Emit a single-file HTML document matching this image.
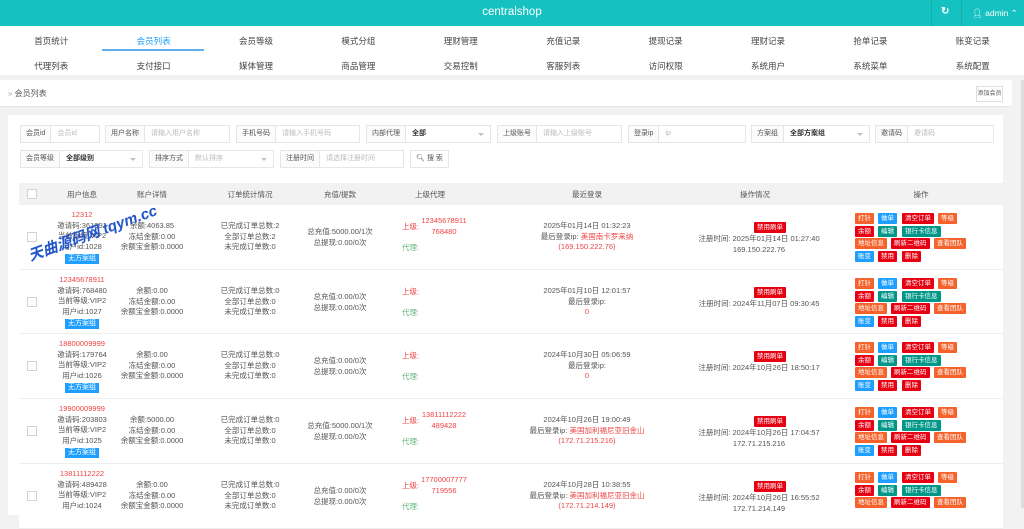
<!DOCTYPE html><html><head><meta charset="utf-8"><style>
*{margin:0;padding:0;box-sizing:border-box}
body{width:1024px;height:508px;overflow:hidden;background:#f2f2f2;font-family:"Liberation Sans","Noto Sans CJK SC",sans-serif;color:#555;font-size:7.5px;position:relative}
.a{position:absolute}
.hd{left:0;top:0;width:1024px;height:26px;background:#16c1c1;color:#fff}
.nav{left:0;top:26px;width:1024px;height:49px;background:#fff}
.nav span{position:absolute;width:102.4px;text-align:center;font-size:8.5px;color:#444}
.bc{left:0;top:80px;width:1012px;height:27px;background:#fff;border-bottom:1px solid #e6e6e6}
.panel{left:8px;top:115px;width:995px;height:400px;background:#fff}
.f{position:absolute;height:18px;border:1px solid #e6e6e6;background:#fff;font-size:7px;display:flex}
.f b{font-weight:normal;color:#555;background:#fbfbfb;border-right:1px solid #e6e6e6;padding:0 5px;line-height:16px;white-space:nowrap}
.f i{font-style:normal;color:#bbb;padding-left:6px;line-height:16px;flex:1;white-space:nowrap}
.f i.v{color:#333;font-weight:bold}
.f .ar{position:absolute;right:6px;top:7px;border:3px solid transparent;border-top-color:#c2c2c2}
.th{left:19px;top:183px;width:984px;height:22px;background:#f2f2f2}
.th span,.c{position:absolute;text-align:center;white-space:nowrap}
.row{position:absolute;left:19px;width:984px;height:65px;border-bottom:1px solid #eee;background:#fff}
.c{line-height:10.7px}
.red{color:#e44}
.grn{color:#5fb878}
.lab{display:inline-block;background:#1e9fff;color:#fff;padding:0 3px;line-height:10px;font-size:7px}
.cb{position:absolute;left:8px;width:10px;height:10px;border:1px solid #d2d2d2;background:#fff}
.bt{position:absolute;color:#fff;font-size:6.5px;line-height:11px;height:11px;padding:0 3px;border-radius:1px;white-space:nowrap}
.o{background:#f5622b}.b{background:#1e9fff}.r{background:#e60012}.t{background:#009688}
</style></head><body>
<div class="a hd">
<div class="a" style="left:0;width:1024px;text-align:center;top:6px;font-size:11.5px">centralshop</div>
<div class="a" style="left:931px;top:0;width:1px;height:26px;background:#12aeae"></div>
<div class="a" style="left:961px;top:0;width:1px;height:26px;background:#12aeae"></div>
<div class="a" style="left:941px;top:6px;font-size:10px;font-weight:bold">&#x21bb;</div>
<div class="a" style="left:972px;top:8px;font-size:8.5px">&#x1F464;&#xFE0E; admin &#8963;</div>
</div>
<div class="a nav">
<span style="left:0;top:9px">首页统计</span><span style="left:102.4px;top:9px;color:#1e9fff">会员列表</span><span style="left:204.8px;top:9px">会员等级</span><span style="left:307.2px;top:9px">模式分组</span><span style="left:409.6px;top:9px">理财管理</span><span style="left:512px;top:9px">充值记录</span><span style="left:614.4px;top:9px">提现记录</span><span style="left:716.8px;top:9px">理财记录</span><span style="left:819.2px;top:9px">抢单记录</span><span style="left:921.6px;top:9px">账变记录</span>
<div class="a" style="left:102px;top:23px;width:102px;height:2px;background:#5fb0f0"></div>
<span style="left:0;top:34px">代理列表</span><span style="left:102.4px;top:34px">支付接口</span><span style="left:204.8px;top:34px">媒体管理</span><span style="left:307.2px;top:34px">商品管理</span><span style="left:409.6px;top:34px">交易控制</span><span style="left:512px;top:34px">客服列表</span><span style="left:614.4px;top:34px">访问权限</span><span style="left:716.8px;top:34px">系统用户</span><span style="left:819.2px;top:34px">系统菜单</span><span style="left:921.6px;top:34px">系统配置</span>
</div>
<div class="a bc"><div class="a" style="left:8px;top:8px;font-size:8px;color:#555"><span style="color:#aaa">»</span> 会员列表</div>
<div class="a" style="left:976px;top:6px;width:27px;height:16px;border:1px solid #ddd;font-size:6px;line-height:14px;text-align:center;white-space:nowrap">添加会员</div></div>
<div class="a" style="left:1021px;top:80px;width:3px;height:428px;background:#ddd"></div>
<div class="a panel"></div>
<div class="f" style="left:20px;top:125px;width:80px"><b>会员id</b><i>会员id</i></div>
<div class="f" style="left:105px;top:125px;width:125px"><b>用户名称</b><i>请输入用户名称</i></div>
<div class="f" style="left:236px;top:125px;width:124px"><b>手机号码</b><i>请输入手机号码</i></div>
<div class="f" style="left:366px;top:125px;width:125px"><b>内部代理</b><i class="v">全部</i><s class="ar"></s></div>
<div class="f" style="left:497px;top:125px;width:125px"><b>上级账号</b><i>请输入上级账号</i></div>
<div class="f" style="left:628px;top:125px;width:118px"><b>登录ip</b><i>ip</i></div>
<div class="f" style="left:751px;top:125px;width:119px"><b>方案组</b><i class="v">全部方案组</i><s class="ar"></s></div>
<div class="f" style="left:875px;top:125px;width:119px"><b>邀请码</b><i>邀请码</i></div>
<div class="f" style="left:20px;top:150px;width:123px"><b>会员等级</b><i class="v">全部级别</i><s class="ar"></s></div>
<div class="f" style="left:149px;top:150px;width:125px"><b>排序方式</b><i>默认排序</i><s class="ar"></s></div>
<div class="f" style="left:280px;top:150px;width:124px"><b>注册时间</b><i>请选择注册时间</i></div>
<div class="f" style="left:410px;top:150px;width:39px;justify-content:center;line-height:16px;color:#555;font-size:7px">&#x1F50D;&#xFE0E; 搜 索</div>
<div class="a th">
<div class="cb" style="top:6px"></div>
<span style="left:33px;width:60px;top:6px">用户信息</span><span style="left:103px;width:60px;top:6px">账户详情</span><span style="left:201px;width:60px;top:6px">订单统计情况</span><span style="left:291px;width:60px;top:6px">充值/提款</span><span style="left:381px;width:60px;top:6px">上级代理</span><span style="left:538px;width:60px;top:6px">最近登录</span><span style="left:706px;width:60px;top:6px">操作情况</span><span style="left:872px;width:60px;top:6px">操作</span>
</div>

<div class="row" style="top:205px">
<div class="cb" style="top:27px"></div>
<div class="c" style="left:13px;width:100px;top:5px"><span class="red">12312</span><br>邀请码:361991<br>当前等级:VIP2<br>用户id:1028</div>
<div class="c" style="left:13px;width:100px;top:48px"><span class="lab">无方案组</span></div>
<div class="c" style="left:83px;width:100px;top:16px">余额:4063.85<br>冻结金额:0.00<br>余额宝金额:0.0000</div>
<div class="c" style="left:181px;width:100px;top:16px">已完成订单总数:2<br>全部订单总数:2<br>未完成订单数:0</div>
<div class="c" style="left:271px;width:100px;top:22px">总充值:5000.00/1次<br>总提现:0.00/0次</div>
<div class="c red" style="left:383px;top:17px">上级:</div><div class="c red" style="left:395px;width:60px;top:11px">12345678911<br>768480</div><div class="c grn" style="left:383px;top:38px">代理:</div>
<div class="c" style="left:488px;width:160px;top:16px">2025年01月14日 01:32:23<br>最后登录ip: <span class="red">美国南卡罗来纳</span><br><span class="red">(169.150.222.76)</span></div>
<div class="bt r" style="left:735px;top:17px">禁用刷单</div>
<div class="c" style="left:660px;width:160px;top:29px">注册时间: 2025年01月14日 01:27:40<br>169.150.222.76</div>
<div class="bt o" style="left:836px;top:8px">打针</div><div class="bt b" style="left:859px;top:8px">做单</div><div class="bt r" style="left:883px;top:8px">清空订单</div><div class="bt o" style="left:919px;top:8px">等级</div>
<div class="bt r" style="left:836px;top:21px">余额</div><div class="bt t" style="left:859px;top:21px">编辑</div><div class="bt t" style="left:883px;top:21px">银行卡信息</div>
<div class="bt o" style="left:836px;top:33px">地址信息</div><div class="bt r" style="left:872px;top:33px">刷新二维码</div><div class="bt o" style="left:915px;top:33px">查看团队</div>
<div class="bt b" style="left:836px;top:46px">账变</div><div class="bt r" style="left:859px;top:46px">禁用</div><div class="bt r" style="left:883px;top:46px">删除</div>
</div>
<div class="a" style="left:25px;top:246px;color:#2255cc;font-size:15px;font-weight:bold;font-style:italic;transform:rotate(-20deg);transform-origin:left top;white-space:nowrap">天曲源码网 tqym.cc</div>

<div class="row" style="top:270px;height:64px">
<div class="cb" style="top:27px"></div>
<div class="c" style="left:13px;width:100px;top:5px"><span class="red">12345678911</span><br>邀请码:768480<br>当前等级:VIP2<br>用户id:1027</div>
<div class="c" style="left:13px;width:100px;top:48px"><span class="lab">无方案组</span></div>
<div class="c" style="left:83px;width:100px;top:16px">余额:0.00<br>冻结金额:0.00<br>余额宝金额:0.0000</div>
<div class="c" style="left:181px;width:100px;top:16px">已完成订单总数:0<br>全部订单总数:0<br>未完成订单数:0</div>
<div class="c" style="left:271px;width:100px;top:22px">总充值:0.00/0次<br>总提现:0.00/0次</div>
<div class="c red" style="left:383px;top:17px">上级:</div><div class="c grn" style="left:383px;top:38px">代理:</div>
<div class="c" style="left:488px;width:160px;top:16px">2025年01月10日 12:01:57<br>最后登录ip:<br><span class="red">0</span></div>
<div class="bt r" style="left:735px;top:17px">禁用刷单</div>
<div class="c" style="left:660px;width:160px;top:29px">注册时间: 2024年11月07日 09:30:45</div>
<div class="bt o" style="left:836px;top:8px">打针</div><div class="bt b" style="left:859px;top:8px">做单</div><div class="bt r" style="left:883px;top:8px">清空订单</div><div class="bt o" style="left:919px;top:8px">等级</div>
<div class="bt r" style="left:836px;top:21px">余额</div><div class="bt t" style="left:859px;top:21px">编辑</div><div class="bt t" style="left:883px;top:21px">银行卡信息</div>
<div class="bt o" style="left:836px;top:33px">地址信息</div><div class="bt r" style="left:872px;top:33px">刷新二维码</div><div class="bt o" style="left:915px;top:33px">查看团队</div>
<div class="bt b" style="left:836px;top:46px">账变</div><div class="bt r" style="left:859px;top:46px">禁用</div><div class="bt r" style="left:883px;top:46px">删除</div>
</div>

<div class="row" style="top:334px">
<div class="cb" style="top:27px"></div>
<div class="c" style="left:13px;width:100px;top:5px"><span class="red">18800009999</span><br>邀请码:179764<br>当前等级:VIP2<br>用户id:1026</div>
<div class="c" style="left:13px;width:100px;top:48px"><span class="lab">无方案组</span></div>
<div class="c" style="left:83px;width:100px;top:16px">余额:0.00<br>冻结金额:0.00<br>余额宝金额:0.0000</div>
<div class="c" style="left:181px;width:100px;top:16px">已完成订单总数:0<br>全部订单总数:0<br>未完成订单数:0</div>
<div class="c" style="left:271px;width:100px;top:22px">总充值:0.00/0次<br>总提现:0.00/0次</div>
<div class="c red" style="left:383px;top:17px">上级:</div><div class="c grn" style="left:383px;top:38px">代理:</div>
<div class="c" style="left:488px;width:160px;top:16px">2024年10月30日 05:06:59<br>最后登录ip:<br><span class="red">0</span></div>
<div class="bt r" style="left:735px;top:17px">禁用刷单</div>
<div class="c" style="left:660px;width:160px;top:29px">注册时间: 2024年10月26日 18:50:17</div>
<div class="bt o" style="left:836px;top:8px">打针</div><div class="bt b" style="left:859px;top:8px">做单</div><div class="bt r" style="left:883px;top:8px">清空订单</div><div class="bt o" style="left:919px;top:8px">等级</div>
<div class="bt r" style="left:836px;top:21px">余额</div><div class="bt t" style="left:859px;top:21px">编辑</div><div class="bt t" style="left:883px;top:21px">银行卡信息</div>
<div class="bt o" style="left:836px;top:33px">地址信息</div><div class="bt r" style="left:872px;top:33px">刷新二维码</div><div class="bt o" style="left:915px;top:33px">查看团队</div>
<div class="bt b" style="left:836px;top:46px">账变</div><div class="bt r" style="left:859px;top:46px">禁用</div><div class="bt r" style="left:883px;top:46px">删除</div>
</div>

<div class="row" style="top:399px">
<div class="cb" style="top:27px"></div>
<div class="c" style="left:13px;width:100px;top:5px"><span class="red">19900009999</span><br>邀请码:203803<br>当前等级:VIP2<br>用户id:1025</div>
<div class="c" style="left:13px;width:100px;top:48px"><span class="lab">无方案组</span></div>
<div class="c" style="left:83px;width:100px;top:16px">余额:5000.00<br>冻结金额:0.00<br>余额宝金额:0.0000</div>
<div class="c" style="left:181px;width:100px;top:16px">已完成订单总数:0<br>全部订单总数:0<br>未完成订单数:0</div>
<div class="c" style="left:271px;width:100px;top:22px">总充值:5000.00/1次<br>总提现:0.00/0次</div>
<div class="c red" style="left:383px;top:17px">上级:</div><div class="c red" style="left:395px;width:60px;top:11px">13811112222<br>489428</div><div class="c grn" style="left:383px;top:38px">代理:</div>
<div class="c" style="left:488px;width:160px;top:16px">2024年10月26日 19:00:49<br>最后登录ip: <span class="red">美国加利福尼亚旧金山</span><br><span class="red">(172.71.215.216)</span></div>
<div class="bt r" style="left:735px;top:17px">禁用刷单</div>
<div class="c" style="left:660px;width:160px;top:29px">注册时间: 2024年10月26日 17:04:57<br>172.71.215.216</div>
<div class="bt o" style="left:836px;top:8px">打针</div><div class="bt b" style="left:859px;top:8px">做单</div><div class="bt r" style="left:883px;top:8px">清空订单</div><div class="bt o" style="left:919px;top:8px">等级</div>
<div class="bt r" style="left:836px;top:21px">余额</div><div class="bt t" style="left:859px;top:21px">编辑</div><div class="bt t" style="left:883px;top:21px">银行卡信息</div>
<div class="bt o" style="left:836px;top:33px">地址信息</div><div class="bt r" style="left:872px;top:33px">刷新二维码</div><div class="bt o" style="left:915px;top:33px">查看团队</div>
<div class="bt b" style="left:836px;top:46px">账变</div><div class="bt r" style="left:859px;top:46px">禁用</div><div class="bt r" style="left:883px;top:46px">删除</div>
</div>

<div class="row" style="top:464px">
<div class="cb" style="top:27px"></div>
<div class="c" style="left:13px;width:100px;top:5px"><span class="red">13811112222</span><br>邀请码:489428<br>当前等级:VIP2<br>用户id:1024</div>
<div class="c" style="left:83px;width:100px;top:16px">余额:0.00<br>冻结金额:0.00<br>余额宝金额:0.0000</div>
<div class="c" style="left:181px;width:100px;top:16px">已完成订单总数:0<br>全部订单总数:0<br>未完成订单数:0</div>
<div class="c" style="left:271px;width:100px;top:22px">总充值:0.00/0次<br>总提现:0.00/0次</div>
<div class="c red" style="left:383px;top:17px">上级:</div><div class="c red" style="left:395px;width:60px;top:11px">17700007777<br>719556</div><div class="c grn" style="left:383px;top:38px">代理:</div>
<div class="c" style="left:488px;width:160px;top:16px">2024年10月28日 10:38:55<br>最后登录ip: <span class="red">美国加利福尼亚旧金山</span><br><span class="red">(172.71.214.149)</span></div>
<div class="bt r" style="left:735px;top:17px">禁用刷单</div>
<div class="c" style="left:660px;width:160px;top:29px">注册时间: 2024年10月26日 16:55:52<br>172.71.214.149</div>
<div class="bt o" style="left:836px;top:8px">打针</div><div class="bt b" style="left:859px;top:8px">做单</div><div class="bt r" style="left:883px;top:8px">清空订单</div><div class="bt o" style="left:919px;top:8px">等级</div>
<div class="bt r" style="left:836px;top:21px">余额</div><div class="bt t" style="left:859px;top:21px">编辑</div><div class="bt t" style="left:883px;top:21px">银行卡信息</div>
<div class="bt o" style="left:836px;top:33px">地址信息</div><div class="bt r" style="left:872px;top:33px">刷新二维码</div><div class="bt o" style="left:915px;top:33px">查看团队</div>
</div>
</body></html>
